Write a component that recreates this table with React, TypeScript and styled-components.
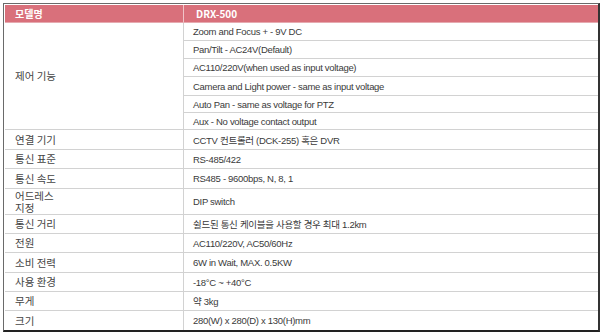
import React, {FC} from 'react';
import styled, {createGlobalStyle} from 'styled-components';

/** Строки таблицы характеристик */
const CONTROL_ITEMS: {text: string; h: number}[] = [
    {text: 'Zoom and Focus + - 9V DC', h: 18},
    {text: 'Pan/Tilt - AC24V(Default)', h: 18},
    {text: 'AC110/220V(when used as input voltage)', h: 18},
    {text: 'Camera and Light power - same as input voltage', h: 19},
    {text: 'Auto Pan - same as voltage for PTZ', h: 17},
    {text: 'Aux - No voltage contact output', h: 17},
];

const SPEC_ROWS: {label: string; value: string; h: number}[] = [
    {label: '연결 기기', value: 'CCTV 컨트롤러 (DCK-255) 혹은 DVR', h: 20},
    {label: '통신 표준', value: 'RS-485/422', h: 19},
    {label: '통신 속도', value: 'RS485 - 9600bps, N, 8, 1', h: 20},
    {label: '어드레스\n지정', value: 'DIP switch', h: 26},
    {label: '통신 거리', value: '쉴드된 통신 케이블을 사용할 경우 최대 1.2km', h: 19},
    {label: '전원', value: 'AC110/220V, AC50/60Hz', h: 19},
    {label: '소비 전력', value: '6W in Wait, MAX. 0.5KW', h: 20},
    {label: '사용 환경', value: '-18°C ~ +40°C', h: 19},
    {label: '무게', value: '약 3kg', h: 19},
    {label: '크기', value: '280(W) x 280(D) x 130(H)mm', h: 19},
];

const GlobalStyle = createGlobalStyle`
    html, body {
        margin: 0;
        padding: 0;
        background: #fff;
    }
    body {
        font-family: "Liberation Sans", "Noto Sans CJK KR", sans-serif;
    }
`;

const App: FC = () => {
    const rows = [18, ...CONTROL_ITEMS.map(i => i.h), ...SPEC_ROWS.map(r => r.h)];
    return (
        <>
            <GlobalStyle />
            <Frame>
                <Grid style={{gridTemplateRows: rows.map(h => `${h}px`).join(' ')}}>
                    <HeadCell>모델명</HeadCell>
                    <HeadCell $value>DRX-500</HeadCell>

                    <LabelCell style={{gridRow: `span ${CONTROL_ITEMS.length}`}}>제어 기능</LabelCell>
                    {CONTROL_ITEMS.map(item => (
                        <ValueCell key={item.text}>{item.text}</ValueCell>
                    ))}

                    {SPEC_ROWS.map((row, i) => (
                        <React.Fragment key={row.label}>
                            <LabelCell $last={i === SPEC_ROWS.length - 1}>{row.label}</LabelCell>
                            <ValueCell $last={i === SPEC_ROWS.length - 1}>{row.value}</ValueCell>
                        </React.Fragment>
                    ))}
                </Grid>
            </Frame>
        </>
    );
};

export default App;

const Frame = styled.div`
    margin: 3px 0 0 3px;
    width: 593px;
    border-top: 1px solid #6a6a6a;
    border-left: 1px solid #6a6a6a;
    border-right: 2px solid #333;
    border-bottom: 2px solid #222;
    padding: 1px 0 0 1px;
    background: #fff;
`;

const Grid = styled.div`
    display: grid;
    grid-template-columns: 178px 1fr;
`;

const Cell = styled.div`
    display: flex;
    align-items: center;
    box-sizing: border-box;
    color: #3a3a3a;
    white-space: pre-line;
`;

const HeadCell = styled(Cell)<{$value?: boolean}>`
    background: #d9707b;
    color: #fff;
    font-family: "Noto Sans CJK KR", sans-serif;
    font-weight: 700;
    font-size: 10px;
    padding-left: ${({$value}) => ($value ? 12 : 10)}px;
    border-left: ${({$value}) => ($value ? '1px solid #f0c4c8' : 'none')};
    border-bottom: 1px solid #e6aab0;
`;

const LabelCell = styled(Cell)<{$last?: boolean}>`
    font-family: "Noto Sans CJK KR", sans-serif;
    font-size: 10.5px;
    line-height: 12px;
    color: #444;
    padding-left: 10px;
    border-bottom: ${({$last}) => ($last ? 'none' : '1px solid #d2d2d2')};
`;

const ValueCell = styled(Cell)<{$last?: boolean}>`
    font-family: "Liberation Sans", "Noto Sans CJK KR", sans-serif;
    font-size: 9.5px;
    letter-spacing: -0.3px;
    padding-left: 9px;
    border-left: 1px solid #d2d2d2;
    border-bottom: ${({$last}) => ($last ? 'none' : '1px solid #d2d2d2')};
`;
